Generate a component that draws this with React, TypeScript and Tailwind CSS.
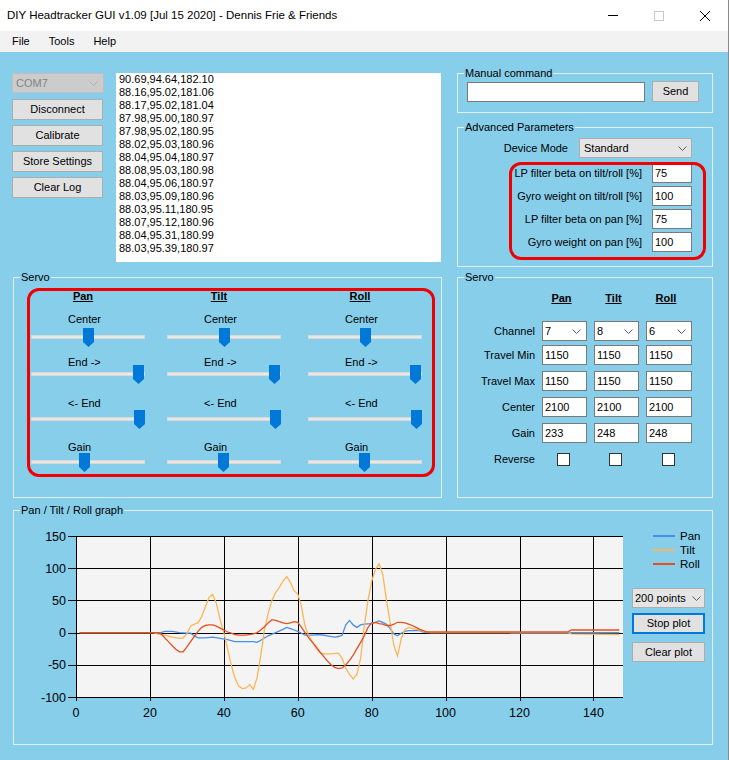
import React from "react";

const FONT = "font-['Liberation_Sans',Arial,sans-serif]";

function Chevron({ color = "#606060" }: { color?: string }) {
  return (
    <svg width="9" height="5" viewBox="0 0 9 5">
      <polyline points="0.5,0.5 4.5,4.5 8.5,0.5" fill="none" stroke={color} strokeWidth="1" />
    </svg>
  );
}

function Btn({ children, className = "" }: { children: React.ReactNode; className?: string }) {
  return (
    <div className={`flex items-center justify-center bg-[#e1e1e1] border border-[#adadad] text-[11px] text-black ${className}`}>
      {children}
    </div>
  );
}

function GroupBox({ title, className = "", children }: { title: string; className?: string; children?: React.ReactNode }) {
  return (
    <div className={`relative border border-[#e2f0f6] ${className}`}>
      <div className="absolute -top-[8px] left-[6px] px-[1px] bg-[#87ceeb] text-[11px] leading-[14px] text-black whitespace-nowrap">
        {title}
      </div>
      {children}
    </div>
  );
}

function TextBox({ value, className = "" }: { value: string; className?: string }) {
  return (
    <div className={`h-[20px] border border-[#7a7a7a] bg-white text-[11px] leading-[18px] pl-[2px] text-black ${className}`}>{value}</div>
  );
}

function Slider({ left }: { left: number }) {
  return (
    <div className="relative h-[19px] w-[114px]">
      <div className="absolute left-0 right-0 top-[7px] h-[4px] bg-[#e8e8e8] border border-[#d8d8d8]" />
      <svg className="absolute top-0" style={{ left }} width="11" height="19" viewBox="0 0 11 19">
        <path d="M0 0H11V14L5.5 19L0 14Z" fill="#0078d7" />
      </svg>
    </div>
  );
}

function ServoCol({ name, lefts, className = "" }: { name: string; lefts: number[]; className?: string }) {
  return (
    <div className={`w-[114px] flex flex-col text-[11px] text-black ${className}`}>
      <div className="-mt-[1px] h-[12px] leading-[12px] text-center pr-[10px] font-bold underline">{name}</div>
      <div className="mt-[10px] h-[14px] leading-[14px] pl-[37px]">Center</div>
      <div className="mt-[2px]"><Slider left={lefts[0]} /></div>
      <div className="mt-[8px] h-[14px] leading-[14px] pl-[37px]">{"End ->"}</div>
      <div className="-mt-[4px]"><Slider left={lefts[1]} /></div>
      <div className="mt-[12px] h-[14px] leading-[14px] pl-[37px]">{"<- End"}</div>
      <div className="mt-0"><Slider left={lefts[2]} /></div>
      <div className="mt-[11px] h-[14px] leading-[14px] pl-[37px]">Gain</div>
      <div className="-mt-[1px]"><Slider left={lefts[3]} /></div>
    </div>
  );
}

function ServoRow({ label, cells, className = "" }: { label: string; cells: React.ReactNode[]; className?: string }) {
  return (
    <div className={`flex items-center ${className}`}>
      <div className="w-[77px] text-right text-[11px] text-black">{label}</div>
      <div className="ml-[7px] w-[45px]">{cells[0]}</div>
      <div className="ml-[7px] w-[45px]">{cells[1]}</div>
      <div className="ml-[7px] w-[46px]">{cells[2]}</div>
    </div>
  );
}

function ChanCombo({ v }: { v: string }) {
  return (
    <div className="h-[20px] border border-[#7a7a7a] bg-white flex items-center justify-between pl-[2px] pr-[5px] text-[11px] text-black">
      <span>{v}</span>
      <Chevron />
    </div>
  );
}

function Check() {
  return (
    <div className="flex justify-center pr-[2px]">
      <div className="w-[13px] h-[13px] border border-[#333333] bg-white" />
    </div>
  );
}

const tilt: number[][] = [
  [1, 0], [21, 0], [22, -2], [23, -3], [24, -4], [26, -7], [28, -9], [29, -8], [30, -2], [31, 10], [32, 13], [33, 15],
  [34, 25], [35, 40], [36, 55], [37, 59], [38, 45], [39, 20], [40, 0], [41, -25], [42, -50], [43, -70], [44, -83],
  [45, -87], [46, -86], [47, -81], [48, -88], [49, -70], [50, -35], [51, 5], [52, 30], [53, 50], [54, 62], [55, 70],
  [56, 80], [57, 87], [58, 78], [59, 65], [60, 60], [61, 40], [62, 10], [63, -5], [64, -15], [65, -25], [66, -31],
  [67, -33], [69, -33], [71, -32], [72, -40], [73, -55], [74, -65], [75, -72], [76, -65], [77, -40], [78, 10], [79, 50],
  [80, 80], [81, 98], [82, 107], [83, 90], [84, 50], [85, 15], [86, -20], [87, -36], [88, -10], [89, 5], [90, 8],
  [91, 6], [92, 5], [93, 4], [94, 2], [95, 1], [96, 0], [133, 0], [134, -2], [147, -3],
];

const roll: number[][] = [
  [1, 0], [22, 0], [23, -2], [24, -8], [25, -14], [26, -20], [27, -26], [28, -30], [29, -30], [30, -22], [31, -14],
  [32, -6], [33, 2], [34, 8], [35, 11], [36, 12], [37, 12], [38, 10], [39, 7], [40, 4], [41, 1], [42, -1], [43, -3],
  [44, -4], [46, -4], [48, -2], [49, 0], [50, 4], [51, 9], [52, 15], [53, 20], [54, 19], [55, 17], [56, 15], [57, 14],
  [58, 15], [59, 17], [60, 16], [61, 8], [62, 0], [63, -8], [64, -15], [65, -22], [66, -30], [67, -37], [68, -44],
  [69, -50], [70, -54], [71, -56], [72, -55], [73, -50], [74, -43], [75, -35], [76, -25], [77, -15], [78, -5], [79, 8],
  [80, 15], [81, 16], [82, 14], [83, 13], [84, 11], [85, 11], [86, 13], [87, 16], [88, 16], [89, 15], [90, 13],
  [91, 11], [92, 8], [93, 5], [94, 3], [95, 1], [133, 1], [134, 4], [147, 4],
];

const pan: number[][] = [
  [1, 0], [23, 0], [24, 2], [26, 2], [28, 0], [30, -1], [31, -1], [32, -5], [33, -8], [35, -8], [37, -7], [39, -9],
  [41, -11], [43, -14], [45, -14], [48, -14], [49, -15], [50, -12], [52, -5], [54, 0], [56, 5], [57, 8], [58, 6],
  [59, 4], [60, 2], [61, -1], [62, -4], [64, -4], [66, -3], [68, -5], [70, -7], [71, -6], [72, -4], [73, 12], [74, 19],
  [75, 12], [76, 8], [77, 12], [78, 13], [80, 14], [81, 16], [82, 18], [83, 16], [84, 13], [85, 6], [86, -2], [87, -5],
  [88, -1], [89, 2], [90, 3], [93, 3], [94, 1], [95, 0], [117, 0], [118, -1], [133, -1], [134, 0], [147, 0],
];

function Chart() {
  const X0 = 62, Y0 = 25, W = 547, H = 161;
  const xs = (v: number) => X0 + (v * W) / 148;
  const ys = (v: number) => Y0 + ((150 - v) * H) / 250;
  const pts = (d: number[][]) => d.map(([x, y]) => `${xs(x).toFixed(1)},${ys(y).toFixed(1)}`).join(" ");
  const yv = [150, 100, 50, 0, -50, -100];
  const xv = [0, 20, 40, 60, 80, 100, 120, 140];
  return (
    <svg width="612" height="215" viewBox="0 0 612 215" className="block">
      <rect x={X0} y={Y0} width={W} height={H} fill="#f4f4f4" />
      {yv.map((v) => (
        <line key={"h" + v} x1={X0 - 8} x2={X0 + W} y1={Math.round(ys(v)) + 0.5} y2={Math.round(ys(v)) + 0.5} stroke="#000" strokeWidth="1" />
      ))}
      {xv.map((v) => (
        <line key={"v" + v} x1={Math.round(xs(v)) + 0.5} x2={Math.round(xs(v)) + 0.5} y1={Y0} y2={Y0 + H + 4} stroke="#000" strokeWidth="1" />
      ))}
      {yv.map((v) => (
        <text key={"yl" + v} x={52} y={ys(v) + 4.5} textAnchor="end" fontSize="12.5" fontFamily="Liberation Sans, Arial, sans-serif" fill="#000">{v}</text>
      ))}
      {xv.map((v) => (
        <text key={"xl" + v} x={xs(v)} y={205.5} textAnchor="middle" fontSize="12.5" fontFamily="Liberation Sans, Arial, sans-serif" fill="#000">{v}</text>
      ))}
      <polyline points={pts(pan)} fill="none" stroke="#4a8fe7" strokeWidth="1.3" />
      <polyline points={pts(tilt)} fill="none" stroke="#f9b757" strokeWidth="1.3" />
      <polyline points={pts(roll)} fill="none" stroke="#e5501f" strokeWidth="1.3" />
    </svg>
  );
}

function Legend({ color, label }: { color: string; label: string }) {
  return (
    <div className="flex items-center h-[14px] pl-[21px]">
      <div className="w-[22px] h-[2px]" style={{ backgroundColor: color }} />
      <div className="ml-[5px] text-[11.5px] leading-[14px] text-black">{label}</div>
    </div>
  );
}

const logLines = [
  "90.69,94.64,182.10", "88.16,95.02,181.06", "88.17,95.02,181.04", "87.98,95.00,180.97", "87.98,95.02,180.95",
  "88.02,95.03,180.96", "88.04,95.04,180.97", "88.08,95.03,180.98", "88.04,95.06,180.97", "88.03,95.09,180.96",
  "88.03,95.11,180.95", "88.07,95.12,180.96", "88.04,95.31,180.99", "88.03,95.39,180.97",
];

export default function App() {
  return (
    <div className={`${FONT} w-[729px] h-[760px] overflow-hidden border-r border-[#8a8a8a] flex flex-col`}>
      {/* Title bar */}
      <div className="h-[31px] bg-white flex items-center shrink-0">
        <div className="pl-[7px] text-[11.5px] text-black whitespace-nowrap">DIY Headtracker GUI v1.09 [Jul 15 2020] - Dennis Frie &amp; Friends</div>
        <div className="ml-auto flex h-full">
          <div className="w-[46px] flex items-center justify-center">
            <svg width="10" height="1" viewBox="0 0 10 1"><rect width="10" height="1" fill="#000" /></svg>
          </div>
          <div className="w-[46px] flex items-center justify-center">
            <svg width="10" height="10" viewBox="0 0 10 10"><rect x="0.5" y="0.5" width="9" height="9" fill="none" stroke="#c8c8c8" /></svg>
          </div>
          <div className="w-[46px] flex items-center justify-center">
            <svg width="10" height="10" viewBox="0 0 10 10"><path d="M0 0L10 10M10 0L0 10" stroke="#000" strokeWidth="1" /></svg>
          </div>
        </div>
      </div>
      {/* Menu */}
      <div className="h-[21px] bg-[#f2f2f2] flex items-center gap-[19px] pl-[12px] text-[11px] text-black shrink-0">
        <span>File</span>
        <span>Tools</span>
        <span>Help</span>
      </div>
      {/* Main */}
      <div className="flex-1 bg-[#87ceeb] pl-[12px] pt-[21px]">
        {/* Top row */}
        <div className="flex items-start">
          <div className="w-[92px] flex flex-col">
            <div className="h-[20px] w-[92px] bg-[#cccccc] border border-[#bfbfbf] flex items-center justify-between pl-[3px] pr-[5px] text-[11px] text-[#838383]">
              <span>COM7</span>
              <Chevron color="#b0b0b0" />
            </div>
            <Btn className="mt-[6px] w-[91px] h-[21px]">Disconnect</Btn>
            <Btn className="mt-[5px] w-[91px] h-[21px]">Calibrate</Btn>
            <Btn className="mt-[5px] w-[91px] h-[21px]">Store Settings</Btn>
            <Btn className="mt-[5px] w-[91px] h-[21px]">Clear Log</Btn>
          </div>
          <div className="ml-[12px] w-[325px] h-[189px] bg-white pl-[3px] text-[11px] leading-[13px] text-black">
            {logLines.map((l, i) => (
              <div key={i}>{l}</div>
            ))}
          </div>
          <div className="ml-[16px] w-[256px] flex flex-col">
            <GroupBox title="Manual command" className="h-[40px]">
              <div className="flex items-center pl-[9px] pt-[7px]">
                <TextBox value="" className="w-[178px]" />
                <Btn className="ml-[7px] w-[47px] h-[21px]">Send</Btn>
              </div>
            </GroupBox>
            <GroupBox title="Advanced Parameters" className="mt-[14px] h-[140px]">
              <div className="flex flex-col items-end pr-[20px] pt-[10px] text-[11px] text-black">
                <div className="flex items-center">
                  <span>Device Mode</span>
                  <div className="ml-[11px] w-[113px] h-[20px] bg-[#e5e5e5] border border-[#adadad] flex items-center justify-between pl-[4px] pr-[4px]">
                    <span>Standard</span>
                    <Chevron />
                  </div>
                </div>
                {[
                  ["LP filter beta on tilt/roll [%]", "75"],
                  ["Gyro weight on tilt/roll [%]", "100"],
                  ["LP filter beta on pan [%]", "75"],
                  ["Gyro weight on pan [%]", "100"],
                ].map(([l, v], i) => (
                  <div key={i} className={`flex items-center ${i === 0 ? "mt-[5px]" : "mt-[3px]"}`}>
                    <span>{l}</span>
                    <TextBox value={v} className="ml-[10px] w-[40px]" />
                  </div>
                ))}
              </div>
              <div className="absolute left-[51px] top-[34px] w-[197px] h-[98px] border-[3px] border-[#f00000] rounded-[12px] pointer-events-none" />
            </GroupBox>
          </div>
        </div>
        {/* Servo row */}
        <div className="flex mt-[10px]">
          <GroupBox title="Servo" className="ml-[1px] w-[429px] h-[221px]">
            <div className="ml-[13px] mt-[10px] w-[408px] h-[189px] border-[3px] border-[#f00000] rounded-[12px] flex pl-[1px]">
              <ServoCol name="Pan" lefts={[52, 102, 103, 48]} />
              <ServoCol name="Tilt" lefts={[52, 102, 103, 51]} className="ml-[22px]" />
              <ServoCol name="Roll" lefts={[52, 102, 103, 51]} className="ml-[27px]" />
            </div>
          </GroupBox>
          <GroupBox title="Servo" className="ml-[15px] w-[256px] h-[221px]">
            <div className="flex flex-col pt-[13px]">
              <ServoRow
                label=""
                className="h-[14px]"
                cells={["Pan", "Tilt", "Roll"].map((h) => (
                  <div key={h} className="text-center pr-[6px] text-[11px] font-bold underline text-black leading-[14px]">{h}</div>
                ))}
              />
              <ServoRow label="Channel" className="mt-[16px]" cells={[<ChanCombo v="7" />, <ChanCombo v="8" />, <ChanCombo v="6" />]} />
              <ServoRow label="Travel Min" className="mt-[4px]" cells={[<TextBox value="1150" />, <TextBox value="1150" />, <TextBox value="1150" />]} />
              <ServoRow label="Travel Max" className="mt-[6px]" cells={[<TextBox value="1150" />, <TextBox value="1150" />, <TextBox value="1150" />]} />
              <ServoRow label="Center" className="mt-[6px]" cells={[<TextBox value="2100" />, <TextBox value="2100" />, <TextBox value="2100" />]} />
              <ServoRow label="Gain" className="mt-[6px]" cells={[<TextBox value="233" />, <TextBox value="248" />, <TextBox value="248" />]} />
              <ServoRow label="Reverse" className="mt-[10px] h-[13px]" cells={[<Check />, <Check />, <Check />]} />
            </div>
          </GroupBox>
        </div>
        {/* Graph */}
        <GroupBox title="Pan / Tilt / Roll graph" className="mt-[12px] ml-[1px] w-[700px] h-[235px]">
          <div className="flex items-start">
            <Chart />
            <div className="ml-[6px] w-[73px] flex flex-col">
              <div className="mt-[18px]">
                <Legend color="#4a8fe7" label="Pan" />
                <Legend color="#f9b757" label="Tilt" />
                <Legend color="#e5501f" label="Roll" />
              </div>
              <div className="mt-[17px] h-[20px] bg-[#e5e5e5] border border-[#adadad] flex items-center justify-between pl-[2px] pr-[3px] text-[11px] text-black">
                <span>200 points</span>
                <Chevron />
              </div>
              <div className="mt-[5px] h-[21px] bg-[#e1e1e1] border-2 border-[#0078d7] flex items-center justify-center text-[11px] text-black">Stop plot</div>
              <Btn className="mt-[8px] h-[20px]">Clear plot</Btn>
            </div>
          </div>
        </GroupBox>
      </div>
    </div>
  );
}
